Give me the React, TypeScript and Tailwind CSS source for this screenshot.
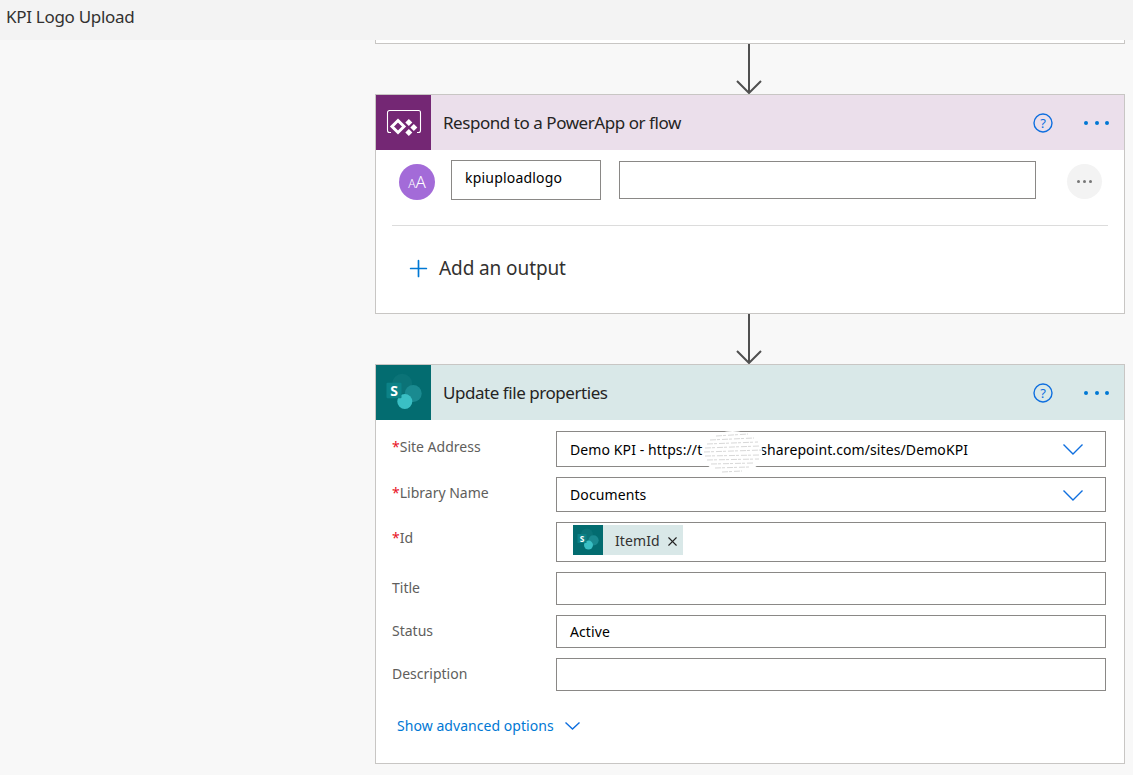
import { Plus, X } from "lucide-react";

const font = "font-['Noto_Sans','Open_Sans',sans-serif]";

function FlowArrow() {
    return (
        <div className="flex justify-center h-[50px]">
            <svg width="28" height="50" viewBox="0 0 28 50" fill="none">
                <path d="M13 0V49" stroke="#505050" strokeWidth="2" />
                <path d="M1 37L13 49L25 37" stroke="#505050" strokeWidth="2" />
            </svg>
        </div>
    );
}

function Chevron({ w, h, className }: { w: number; h: number; className?: string }) {
    return (
        <svg width={w} height={h} viewBox={`0 0 ${w} ${h}`} fill="none" className={className}>
            <path d={`M0.5 0.5L${w / 2} ${h - 1}L${w - 0.5} 0.5`} stroke="#0f6fdf" strokeWidth="1.400" />
        </svg>
    );
}

function SharePointLogo({ size }: { size: number }) {
    return (
        <svg width={size} height={size} viewBox="0 0 40 40" fill="none">
            <circle cx="18.200" cy="10.800" r="10" fill="#0b7377" />
            <circle cx="29.200" cy="20.500" r="8.500" fill="#1a8a90" />
            <circle cx="20.800" cy="28.500" r="7.500" fill="#3abfc4" />
            <rect x="2.500" y="9.800" width="15" height="15.400" rx="1" fill="#0c8287" />
            <text x="10" y="22.500" textAnchor="middle" fontSize="14" fontWeight="700" fill="#fff" fontFamily="Noto Sans, sans-serif">S</text>
        </svg>
    );
}

function PowerAppsIcon() {
    return (
        <svg width="36" height="34" viewBox="0 0 36 34" fill="none">
            <path d="M5 26.500H3.500a2 2 0 0 1-2-2V6.500a2 2 0 0 1 2-2h29a2 2 0 0 1 2 2v18a2 2 0 0 1-2 2H31" stroke="#fff" strokeWidth="1.100" />
            <path d="M12 14.500L18 20.500L12 26.500L6 20.500Z" stroke="#fff" strokeWidth="3" />
            <path d="M22.800 13L26.300 16.500L22.800 20L19.300 16.500Z" fill="#fff" />
            <path d="M27.800 18L31.300 21.500L27.800 25L24.300 21.500Z" fill="#fff" />
            <path d="M22.800 23L26.300 26.500L22.800 30L19.300 26.500Z" fill="#fff" />
        </svg>
    );
}

function CardHeader({ title, tint, iconBg, icon }: { title: string; tint: string; iconBg: string; icon: React.ReactNode }) {
    return (
        <div className={`flex items-center h-[55px] ${tint}`}>
            <div className={`flex items-center justify-center w-[55px] h-[55px] ${iconBg}`}>{icon}</div>
            <div className="flex-1 pl-3 pt-[1px] text-[17px] tracking-[-0.45px] text-[#252423]">{title}</div>
            <svg width="20" height="20" viewBox="0 0 20 20" fill="none" className="mr-[31px]">
                <circle cx="10" cy="10" r="9" stroke="#0f6fdf" strokeWidth="1.400" />
                <text x="10" y="15" textAnchor="middle" fontSize="13" fill="#0f6fdf" fontFamily="Noto Sans, sans-serif">?</text>
            </svg>
            <div className="flex gap-[6.500px] mr-[15px]">
                <span className="w-1 h-1 rounded-full bg-[#0078d4]" />
                <span className="w-1 h-1 rounded-full bg-[#0078d4]" />
                <span className="w-1 h-1 rounded-full bg-[#0078d4]" />
            </div>
        </div>
    );
}

function Field({ label, required, h, mb, children }: { label: string; required?: boolean; h: string; mb: string; children?: React.ReactNode }) {
    return (
        <div className={`flex ${mb}`}>
            <div className="w-[180px] pl-4 pt-[6px] text-[14px] text-[#605e5c] leading-5">
                {required && <span className="text-[#e81123]">*</span>}
                {label}
            </div>
            <div className={`relative w-[550px] ${h} border border-[#8a8886] flex items-center pl-[13px] text-[14px] tracking-[0.1px] text-black`}>
                {children}
            </div>
        </div>
    );
}

export default function App() {
    return (
        <div className={`min-h-[775px] h-[775px] overflow-hidden bg-[#f8f8f8] ${font}`}>
            <div className="h-10 bg-[#f3f3f3] pl-[6px] pt-[5px] text-[17px] leading-6 tracking-[-0.3px] text-[#323130]">KPI Logo Upload</div>
            <div className="ml-[375px] w-[750px]">
                <div className="h-1 bg-white border-x border-b border-[#c8c6c4]" />
                <FlowArrow />
                <div className="h-[220px] bg-white border border-[#c8c6c4]">
                    <CardHeader title="Respond to a PowerApp or flow" tint="bg-[#ebdfeb]" iconBg="bg-[#742774]" icon={<PowerAppsIcon />} />
                    <div className="flex items-center h-[40px] mt-[10px] pl-[23px]">
                        <div className="flex items-center justify-center w-9 h-9 mt-1 rounded-full bg-[#a36bd8] text-white font-light text-[17px]">
                            <span className="text-[12px] mt-[3px]">A</span>A
                        </div>
                        <div className="flex items-center w-[150px] h-10 ml-4 border border-[#8a8886] pl-[13px] pb-[6px] text-[14px] tracking-[0.2px] text-black">kpiuploadlogo</div>
                        <div className="w-[417px] h-[38px] ml-[18px] border border-[#8a8886]" />
                        <div className="flex items-center justify-center gap-[3px] w-[35px] h-[35px] mt-[3px] ml-[31px] rounded-full bg-[#f3f3f3]">
                            <span className="w-[3px] h-[3px] rounded-full bg-[#777]" />
                            <span className="w-[3px] h-[3px] rounded-full bg-[#777]" />
                            <span className="w-[3px] h-[3px] rounded-full bg-[#777]" />
                        </div>
                    </div>
                    <div className="mx-4 mt-[25px] border-t border-[#dcdcdc]" />
                    <div className="flex items-center mt-[25px] pl-[29px] text-[19px] tracking-[-0.1px] text-[#323130] leading-[34px]">
                        <Plus size={27} color="#0078d4" strokeWidth={1.500} className="mr-[7px]" />
                        Add an output
                    </div>
                </div>
                <FlowArrow />
                <div className="h-[400px] bg-white border border-[#c8c6c4]">
                    <CardHeader title="Update file properties" tint="bg-[#d9e8e8]" iconBg="bg-[#036c70]" icon={<SharePointLogo size={40} />} />
                    <div className="pt-[11px]">
                        <Field label="Site Address" required h="h-[36px]" mb="mb-[10px]">
                            Demo KPI - https://t
                            <span className="ml-[58px]">sharepoint.com/sites/DemoKPI</span>
                            <Chevron w={20} h={11} className="absolute right-[22px] top-[12px]" />
                            {/* scribbled out tenant name */}
                            <svg width="61" height="44" viewBox="0 0 61 44" className="absolute left-[145px] top-[-1px]">
                                <ellipse cx="30.500" cy="22" rx="30" ry="22" fill="#fff" />
                                <path d="M14 5L46 3M8 9L52 7M5 13L56 11M3 17L58 15M2 21L60 19M3 25L58 24M5 29L57 28M9 33L52 32M13 37L47 36M20 41L40 40" stroke="#d8d8d8" strokeWidth="1" strokeDasharray="6 1 3 2" />
                            </svg>
                        </Field>
                        <Field label="Library Name" required h="h-[35px]" mb="mb-[10px]">
                            Documents
                            <Chevron w={20} h={11} className="absolute right-[22px] top-[12px]" />
                        </Field>
                        <Field label="Id" required h="h-[40px]" mb="mb-[10px]">
                            <div className="flex items-center h-[30px] mb-1 ml-[3px] bg-[#d9e8e8] text-[14px] text-[#323130]">
                                <div className="flex items-center justify-center w-[30px] h-[30px] bg-[#036c70]">
                                    <SharePointLogo size={24} />
                                </div>
                                <span className="ml-3">ItemId</span>
                                <X size={15} color="#222" strokeWidth={1.800} className="ml-[5px] mr-[3px] mt-[2px]" />
                            </div>
                        </Field>
                        <Field label="Title" h="h-[33px]" mb="mb-[10px]" />
                        <Field label="Status" h="h-[33px]" mb="mb-[10px]">Active</Field>
                        <Field label="Description" h="h-[33px]" mb="mb-[25px]" />
                    </div>
                    <div className="flex items-center pl-[21px] text-[14px] tracking-[0.05px] text-[#0078d4] leading-5">
                        Show advanced options
                        <Chevron w={15} h={8} className="ml-[11px]" />
                    </div>
                </div>
            </div>
        </div>
    );
}
